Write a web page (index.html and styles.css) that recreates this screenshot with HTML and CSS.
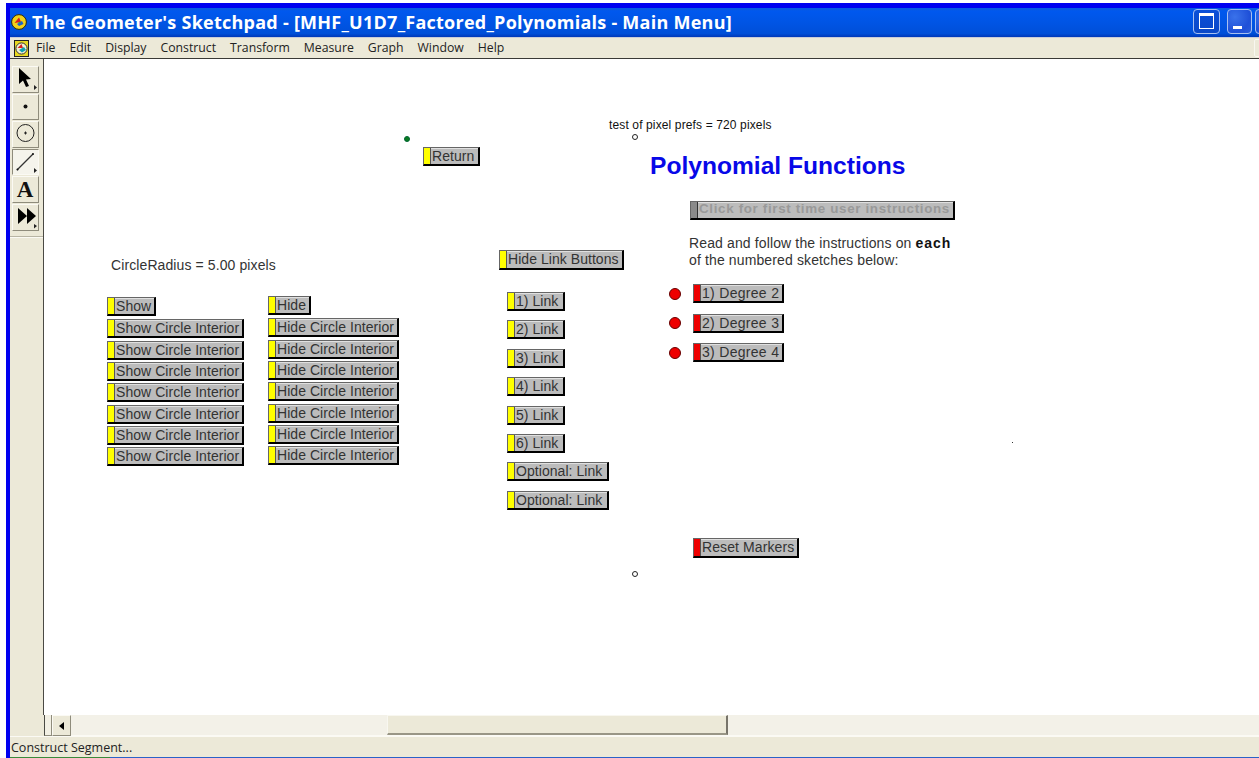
FILE: index.html
```html
<!DOCTYPE html>
<html lang="en">
<head>
<meta charset="utf-8">
<title>The Geometer's Sketchpad</title>
<link rel="stylesheet" href="styles.css">
</head>
<body>
<div class="window">
  <header class="titlebar">
    <svg class="app-icon" width="16" height="16" viewBox="0 0 16 16">
      <circle cx="8" cy="8" r="7.4" fill="#f2d21a" stroke="#2a2a10"/>
      <path d="M3.5 9 L8 3.5 L10 8 Z" fill="#d82020"/>
      <path d="M6 10 L11 7 L12.5 10 L8 12 Z" fill="#1c5fd0"/>
      <path d="M7 8 L10 8 L9 10 Z" fill="#20a060"/>
    </svg>
    <h1 class="title">The Geometer's Sketchpad - [MHF_U1D7_Factored_Polynomials - Main Menu]</h1>
    <div class="caption-buttons">
      <div class="caption-btn wide"><span class="glyph-restore"></span></div>
      <div class="caption-btn"><span class="glyph-min"></span></div>
      <div class="caption-btn"></div>
    </div>
  </header>

  <nav class="menubar">
    <svg class="doc-icon" width="15" height="17" viewBox="0 0 15 17">
      <rect x="0.5" y="0.5" width="14" height="16" fill="#e8d820" stroke="#222"/>
      <circle cx="7.5" cy="8.5" r="5.6" fill="#f4f0d0" stroke="#333"/>
      <path d="M3.5 8 L7.5 4 L9 8 Z" fill="#d82020"/>
      <path d="M5 10 L10 7 L12 10 L8 12.5 Z" fill="#10a0b0"/>
    </svg>
    <ul class="menu">
      <li>File</li><li>Edit</li><li>Display</li><li>Construct</li><li>Transform</li>
      <li>Measure</li><li>Graph</li><li>Window</li><li>Help</li>
    </ul>
    <div class="mdi-btn"></div>
  </nav>

  <div class="workspace">
    <aside class="toolbox">
      <div class="tool">
        <svg width="26" height="26" viewBox="0 0 26 26"><path d="M6 2 L6 18 L10 14.5 L13 21 L16 20 L13 13.5 L18 13 Z" fill="#000"/><path d="M21 19 L24 21.5 L21 24 Z" fill="#222"/></svg>
      </div>
      <div class="tool">
        <svg width="26" height="26" viewBox="0 0 26 26"><circle cx="12.5" cy="12.5" r="2" fill="#111"/></svg>
      </div>
      <div class="tool">
        <svg width="26" height="26" viewBox="0 0 26 26"><circle cx="12.5" cy="12" r="8.5" fill="none" stroke="#222"/><path d="M11 12 H14 M12.5 10.5 V13.5" stroke="#222"/></svg>
      </div>
      <div class="tool pressed">
        <svg width="26" height="26" viewBox="0 0 26 26"><path d="M4 21 L20 5" stroke="#333" stroke-width="1.2"/><circle cx="4.5" cy="20.5" r="1" fill="#111"/><circle cx="20" cy="5" r="1" fill="#111"/><path d="M21 19 L24 21.5 L21 24 Z" fill="#222"/></svg>
      </div>
      <div class="tool">
        <span class="tool-a">A</span>
      </div>
      <div class="tool">
        <svg width="26" height="26" viewBox="0 0 26 26"><path d="M5 4 L14 12 L5 20 Z M14 4 L23 12 L14 20 Z" fill="#000"/><path d="M21 20 L24 22 L21 24.5 Z" fill="#222"/></svg>
      </div>
      <div class="tool-rule"></div>
    </aside>

    <main class="sketch">
      <span class="point open at-top"></span>
      <span class="point open at-bottom"></span>
      <span class="point green"></span>
      <span class="speck"></span>

      <p class="label pixel-test">test of pixel prefs = 720 pixels</p>
      <p class="label radius">CircleRadius = 5.00 pixels</p>
      <h2 class="heading">Polynomial Functions</h2>
      <p class="label instructions">Read and follow the instructions on <b>each</b><br>of the numbered sketches below:</p>

      <div class="group return"><button class="act"><i></i><span>Return</span></button></div>

      <div class="group show-col">
        <button class="act"><i></i><span>Show</span></button>
        <button class="act"><i></i><span>Show Circle Interior</span></button>
        <button class="act"><i></i><span>Show Circle Interior</span></button>
        <button class="act"><i></i><span>Show Circle Interior</span></button>
        <button class="act"><i></i><span>Show Circle Interior</span></button>
        <button class="act"><i></i><span>Show Circle Interior</span></button>
        <button class="act"><i></i><span>Show Circle Interior</span></button>
        <button class="act"><i></i><span>Show Circle Interior</span></button>
      </div>

      <div class="group hide-col">
        <button class="act"><i></i><span>Hide</span></button>
        <button class="act"><i></i><span>Hide Circle Interior</span></button>
        <button class="act"><i></i><span>Hide Circle Interior</span></button>
        <button class="act"><i></i><span>Hide Circle Interior</span></button>
        <button class="act"><i></i><span>Hide Circle Interior</span></button>
        <button class="act"><i></i><span>Hide Circle Interior</span></button>
        <button class="act"><i></i><span>Hide Circle Interior</span></button>
        <button class="act"><i></i><span>Hide Circle Interior</span></button>
      </div>

      <div class="group hide-links"><button class="act"><i></i><span>Hide Link Buttons</span></button></div>

      <div class="group link-col">
        <button class="act"><i></i><span>1) Link</span></button>
        <button class="act"><i></i><span>2) Link</span></button>
        <button class="act"><i></i><span>3) Link</span></button>
        <button class="act"><i></i><span>4) Link</span></button>
        <button class="act"><i></i><span>5) Link</span></button>
        <button class="act"><i></i><span>6) Link</span></button>
        <button class="act"><i></i><span>Optional: Link</span></button>
        <button class="act"><i></i><span>Optional: Link</span></button>
      </div>

      <div class="group first-time"><button class="act disabled"><i></i><span>Click for first time user instructions</span></button></div>

      <div class="group degree-col">
        <div class="degree-row"><span class="marker"></span><button class="act red"><i></i><span>1) Degree 2</span></button></div>
        <div class="degree-row"><span class="marker"></span><button class="act red"><i></i><span>2) Degree 3</span></button></div>
        <div class="degree-row"><span class="marker"></span><button class="act red"><i></i><span>3) Degree 4</span></button></div>
      </div>

      <div class="group reset"><button class="act red"><i></i><span>Reset Markers</span></button></div>
    </main>
  </div>

  <div class="hscroll">
    <div class="split"></div>
    <div class="arrow-btn"><span class="arrow-left"></span></div>
    <div class="track"><div class="thumb"></div></div>
  </div>

  <footer class="status">Construct Segment...</footer>
  <div class="taskbar-edge"></div>
</div>
</body>
</html>
```

FILE: styles.css
```css
* { box-sizing: border-box; }

html, body {
  margin: 0;
  height: 100%;
  background: #fff;
  overflow: hidden;
}

body {
  padding: 3px 0 0 6px;
  font-family: "Liberation Sans", Arial, sans-serif;
}

/* Application window */
.window {
  width: 1253px;
  height: 755px;
  display: flex;
  flex-direction: column;
  border-top: 5px solid #0000f0;
  border-left: 4px solid #0000f0;
  overflow: hidden;
  background: #ece9d8;
}

.titlebar {
  height: 29px;
  flex: none;
  display: flex;
  align-items: center;
  padding-left: 1px;
  background: linear-gradient(#0a5ae0 0, #0058ee 12%, #0054e3 55%, #004fd8 88%, #0038b8 100%);
}

.app-icon { flex: none; margin-top: -1px; }

.title {
  margin: -2px 0 0 5px;
  color: #fff;
  font: 700 18px/24px "Open Sans", sans-serif;
  letter-spacing: 0.25px;
  white-space: nowrap;
}

.caption-buttons {
  margin-left: auto;
  display: flex;
  gap: 3px;
  flex: none;
  margin-right: -21px;
  margin-top: -3px;
}

.caption-btn {
  width: 25px;
  height: 25px;
  border: 1px solid #a8c0f0;
  border-radius: 4px;
  background: radial-gradient(circle at 30% 30%, #3a72ea, #1f50d8 65%, #2a5cdc);
  position: relative;
}

.caption-btn.wide {
  width: 27px;
  margin-right: 4px;
  background: linear-gradient(#0b50d8, #0a48c8);
}

.glyph-restore {
  position: absolute;
  left: 5px;
  top: 3px;
  width: 15px;
  height: 16px;
  border: 1px solid #fff;
  border-top-width: 3px;
}

.glyph-min {
  position: absolute;
  left: 5px;
  top: 16px;
  width: 9px;
  height: 3px;
  background: #fff;
}

/* Menus */
.menubar {
  height: 22px;
  flex: none;
  display: flex;
  align-items: center;
  padding-left: 4px;
  background: #ece9d8;
  border-top: 1px solid #c9cdd8;
  border-bottom: 1px solid #3a3a36;
}

.doc-icon { flex: none; }

.menu {
  list-style: none;
  display: flex;
  gap: 14px;
  margin: 0 0 0 7px;
  padding: 0;
  font: 12.25px/16px "Open Sans", sans-serif;
  color: #222;
}

.mdi-btn {
  margin-left: auto;
  margin-right: -4px;
  width: 9px;
  height: 18px;
  border: 1px solid #f8f7f0;
  border-radius: 2px;
}

.workspace {
  flex: 1;
  min-height: 0;
  display: flex;
}

/* Tool column */
.toolbox {
  width: 34px;
  flex: none;
  display: flex;
  flex-direction: column;
  gap: 1px;
  padding: 7px 0 0 2px;
  border-right: 1px solid #4a4a44;
}

.tool {
  width: 27px;
  height: 26.6px;
  display: flex;
  align-items: center;
  justify-content: center;
  background: #ece9d8;
  border: 1px solid;
  border-color: #fbfaf4 #8f8c7c #8f8c7c #fbfaf4;
}

.tool svg { flex: none; }

.tool.pressed {
  background: #f5f4ec;
  border-color: #8f8c7c #fbfaf4 #fbfaf4 #8f8c7c;
}

.tool-a {
  margin-left: -1px;
  font: 700 23px/24px "Liberation Serif", serif;
  color: #111;
}

.tool-rule {
  margin: 4px 0 0 -2px;
  width: 33px;
  height: 2px;
  border-top: 1px solid #b8b5a4;
  border-bottom: 1px solid #fbfaf4;
}

/* Free sketch plane: objects sit at their plotted coordinates */
.sketch {
  flex: 1;
  position: relative;
  background: #fff;
  overflow: hidden;
}

.label {
  position: absolute;
  margin: 0;
  color: #222;
  white-space: nowrap;
}

.pixel-test { left: 565px; top: 59px; font-size: 12px; line-height: 14px; letter-spacing: 0.13px; color: #111; }
.radius { left: 67px; top: 198px; font-size: 14px; line-height: 16px; letter-spacing: 0.1px; color: #333; }
.instructions { left: 645px; top: 176px; font-size: 14px; line-height: 17px; letter-spacing: 0.13px; color: #333; }
.instructions b { color: #111; letter-spacing: 1px; }

.heading {
  position: absolute;
  left: 606px;
  top: 92px;
  margin: 0;
  font: 700 24.6px/30px "Liberation Sans", sans-serif;
  color: #0808e8;
  white-space: nowrap;
}

.point {
  position: absolute;
  width: 6px;
  height: 6px;
  border-radius: 50%;
}

.point.open { background: #fff; border: 1px solid #222; }
.point.at-top { left: 588px; top: 75px; }
.point.at-bottom { left: 588px; top: 512px; }
.point.green { left: 360px; top: 77px; width: 6px; height: 6px; background: #0a7a20; border: 1px solid #063; }

.speck {
  position: absolute;
  left: 968px;
  top: 383px;
  width: 1px;
  height: 1px;
  background: #333;
}

/* Action buttons */
.group {
  position: absolute;
  display: flex;
  flex-direction: column;
  align-items: flex-start;
}

.act {
  display: flex;
  align-items: stretch;
  height: 19px;
  padding: 0;
  flex: none;
  font: 14px/15px "Liberation Sans", sans-serif;
  letter-spacing: 0.05px;
  color: #333;
  background: #bcbcbc;
  border: 1px solid;
  border-color: #666 #000 #000 #666;
  border-right-width: 2px;
  border-bottom-width: 2px;
  box-shadow: inset 0 1px 0 #e0e0e0;
}

.act i {
  width: 6px;
  flex: none;
  background: #ffff00;
  border-right: 1px solid #555;
  box-sizing: content-box;
}

.act span {
  padding: 1px 3px 0 1px;
  white-space: nowrap;
}

.act.red { letter-spacing: 0.3px; }
.act.red i { background: #ee0000; }
.reset .act.red { letter-spacing: 0.1px; }

.act.disabled { color: #999; font-weight: 700; font-size: 13.4px; letter-spacing: 0.65px; }
.act.disabled i { background: #8a8a8a; border-right-color: #333; }
.act.disabled span { padding-top: 0; line-height: 14px; }

.return { left: 379px; top: 88px; }
.return .act span { padding-right: 4px; }
.show-col { left: 63px; top: 238px; gap: 2.33px; }
.hide-col { left: 224px; top: 237px; gap: 2.33px; }
.show-col .act:first-child, .hide-col .act:first-child { margin-bottom: 1px; }
.hide-links { left: 455px; top: 191px; }
.hide-links .act, .reset .act { height: 20px; }
.link-col { left: 463px; top: 233px; gap: 9.4px; }
.link-col .act span { padding-right: 4.5px; }
.first-time { left: 646px; top: 142px; }

.degree-col { left: 625px; top: 225px; gap: 10.5px; }
.degree-row { display: flex; align-items: center; gap: 12px; }
.marker {
  width: 12px;
  height: 12px;
  border-radius: 50%;
  background: #ee0000;
  border: 1px solid #600;
  flex: none;
}

.reset { left: 649px; top: 479px; }

/* Horizontal scroller */
.hscroll {
  height: 21px;
  flex: none;
  display: flex;
  background: #ece9d8;
  padding-left: 34px;
  position: relative;
}

.split {
  width: 8px;
  border-left: 1px solid #4a4a44;
  border-right: 1px solid #8f8c7c;
  border-bottom: 1px solid #8f8c7c;
  background: #f2f0e4;
}

.arrow-btn {
  width: 19px;
  display: flex;
  align-items: center;
  justify-content: center;
  background: #ece9d8;
  border: 1px solid;
  border-color: #fbfaf4 #8f8c7c #8f8c7c #fbfaf4;
}

.arrow-left {
  width: 0;
  height: 0;
  border: 4.5px solid transparent;
  border-left-width: 0;
  border-right: 5px solid #000;
}

.track {
  flex: 1;
  background: #f3f1e8;
  border-bottom: 1px solid #fbfaf4;
  padding-left: 316px;
}

.thumb {
  width: 341px;
  height: 20px;
  background: #ece9d8;
  border: 1px solid;
  border-color: #f8f7f0 #77746a #999686 #f8f7f0;
  border-right-width: 2px;
  border-bottom-width: 2px;
}

/* Status line */
.status {
  flex: none;
  height: 21px;
  padding-left: 1px;
  font: 12.5px/21px "Open Sans", sans-serif;
  color: #222;
  background: #ece9d8;
  border-top: 1px solid #fbfaf4;
}

.taskbar-edge {
  flex: none;
  height: 1px;
  background: linear-gradient(90deg, #3a8a3a 0 100px, #2a62c8 100px);
}
```
